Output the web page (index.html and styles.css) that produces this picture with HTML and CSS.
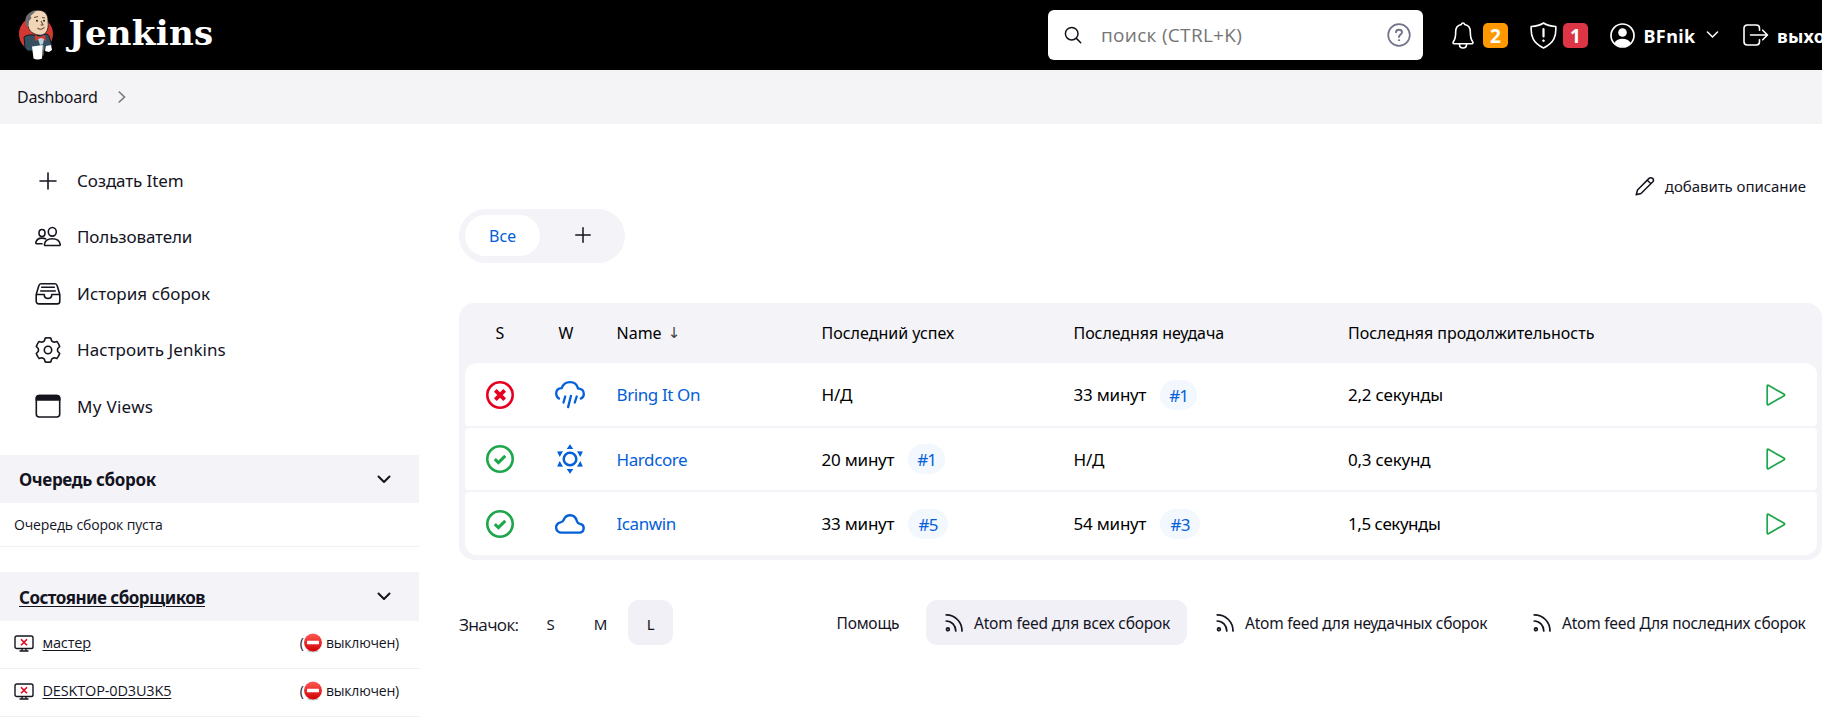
FILE: index.html
```html
<!DOCTYPE html>
<html lang="ru">
<head>
<meta charset="utf-8">
<title>Dashboard [Jenkins]</title>
<link rel="stylesheet" href="styles.css">
</head>
<body>
<svg class="defs" width="0" height="0">
  <defs>
    <linearGradient id="red" x1="0" y1="0" x2="0" y2="1"><stop offset="0" stop-color="#ff5a52"/><stop offset="1" stop-color="#d00008"/></linearGradient>
    <symbol id="rss" viewBox="0 0 18 20"><g fill="none" stroke="currentColor" stroke-width="1.7" stroke-linecap="round"><circle cx="2.900" cy="16.300" r="1.400"/><path d="M1.200 8C6.500 8 10.800 12.500 10.800 18M1.200 1.800C10 1.800 17 9 17 18"/></g></symbol>
    <symbol id="chev" viewBox="0 0 14 9"><path d="M1.500 1.500 7 7l5.500-5.500" fill="none" stroke="currentColor" stroke-width="2" stroke-linecap="round" stroke-linejoin="round"/></symbol>
    <symbol id="play" viewBox="0 0 20 22"><path d="M1.200 2v18a.8.8 0 0 0 1.200.7L18.200 11.700a.8.8 0 0 0 0-1.400L2.400 1.300A.8.8 0 0 0 1.200 2z" fill="none" stroke="currentColor" stroke-width="1.700" stroke-linejoin="round"/></symbol>
    <symbol id="ok" viewBox="0 0 28 28"><g fill="none" stroke="#1ea64b"><circle cx="14" cy="14" r="12.700" stroke-width="2.600"/><path d="m8.800 14.200 3.600 3.400 6.900-6.700" stroke-width="3"/></g></symbol>
    <symbol id="pc" viewBox="0 0 20 17"><rect x="1" y="1" width="18" height="12.500" rx="1.800" fill="none" stroke="currentColor" stroke-width="1.400"/><path d="M8 13.500v2.200M12 13.500v2.200M5.500 16h9" stroke="currentColor" stroke-width="1.300"/><path d="m7 4.200 6 6M13 4.200l-6 6" stroke="#e6001f" stroke-width="1.600"/></symbol>
    <symbol id="stop" viewBox="0 0 18 20"><ellipse cx="9" cy="18" rx="6" ry="1.500" fill="#ccc"/><circle cx="9" cy="9.500" r="9" fill="url(#red)"/><rect x="3" y="7.700" width="12" height="3.600" rx=".5" fill="#fff"/></symbol>
  </defs>
</svg>

<header class="top">
  <svg class="butler" width="36" height="52" viewBox="0 0 36 52">
    <ellipse cx="18" cy="25" rx="17" ry="17.500" fill="#d33833"/>
    <path d="M6 28C10 25 14 26 21 26.500 27 24 30 25 31 27l3 10-4 4-20 1-3-3z" fill="#335061" stroke="#10181d"/>
    <path d="M9 12C9 4 14 1.200 20 1.200S30 4.500 30 12c.5 5 0 9-2 11.500-2 2.300-5 3-7.500 2.500C15 25 11 22 10.500 18 9 17 8.500 15 9 12z" fill="#f0d6b7" stroke="#231f20" stroke-width=".8"/>
    <path d="M18 2C12 2 8 6 7.500 10L8 17l2.500 1 .5-6 2.500-3-1-2z" fill="#6d6b6d"/>
    <path d="M16 8.500l4-1M24 8.500l3 .5M23 12l2 4h-2.500M19.500 19c2 1.700 5 1.400 7-.6" fill="none" stroke="#6d4c3a" stroke-width="1.100"/>
    <circle cx="19" cy="11.800" r="1" fill="#222"/><circle cx="26" cy="11.800" r="1" fill="#222"/>
    <path d="m17 26 5 2 5-2 1 6-5.500-2L17 32z" fill="#d33833"/>
    <path d="m20 30 3-1 3 1-1 5-3 1z" fill="#b9d1dc"/>
    <path d="M14 37.500 25 36l-1 13.500c-2.500 1.200-6 1.200-8.500 0zM28 37l5-1 1 5-3 2-4-1z" fill="#fff"/>
    <path d="M25 36.500v10" stroke="#999" stroke-width="1"/>
  </svg>
  <span class="brand">Jenkins</span>
  <div class="search">
    <svg width="18" height="18" viewBox="0 0 18 18" fill="none" stroke="#14141f" stroke-width="1.500" stroke-linecap="round"><circle cx="7.700" cy="7.700" r="6.300"/><path d="m12.400 12.400 4.300 4.300"/></svg>
    <span class="ph">поиск (CTRL+K)</span>
    <svg width="24" height="24" viewBox="0 0 24 24" fill="none" stroke="#73738c" stroke-width="1.700" stroke-linecap="round"><circle cx="12" cy="12" r="10.800"/><path d="M9 9.200C9 7.500 10.200 6.700 12 6.700s3 .9 3 2.500c0 2.200-3 2.300-3 4.800" stroke-width="1.900"/><circle cx="12" cy="17.200" r=".6" fill="#73738c" stroke-width="1"/></svg>
  </div>
  <svg class="bell" width="22" height="27" viewBox="0 0 22 27" fill="none" stroke="#fff" stroke-width="1.600" stroke-linejoin="round"><path d="M11 1c-.9 0-1.500.7-1.700 1.500C5.600 3.300 3.700 6 3.700 9.500c0 6.500-.8 8.200-2.200 10-.9 1.100-.5 2.200.7 2.200h17.600c1.200 0 1.600-1.100.7-2.200-1.400-1.800-2.200-3.500-2.200-10 0-3.500-1.900-6.200-5.600-7C12.500 1.700 11.900 1 11 1zM7.500 21.700v.8c0 2 1.500 3.500 3.500 3.500s3.500-1.500 3.500-3.500v-.8"/></svg>
  <span class="badge warn">2</span>
  <svg class="shield" width="27" height="27" viewBox="0 0 27 27" fill="none" stroke="#fff" stroke-width="1.600" stroke-linejoin="round"><path d="M13.500 1C10.500 3 5.500 4.200 1.200 4.500.6 14 2.800 21 13.500 26 24.200 21 26.400 14 25.800 4.500 21.500 4.200 16.500 3 13.500 1z"/><path d="M13.500 7v7.500" stroke-width="2.200" stroke-linecap="round"/><circle cx="13.500" cy="18.700" r=".9" fill="#fff" stroke-width=".8"/></svg>
  <span class="badge danger">1</span>
  <svg class="user" width="25" height="25" viewBox="0 0 25 25"><circle cx="12.500" cy="12.500" r="11.500" fill="none" stroke="#fff" stroke-width="1.700"/><circle cx="12.500" cy="9.500" r="4.300" fill="#fff"/><path d="M4.500 20C6 17 9 15.800 12.500 15.800S19 17 20.500 20c-2 2.500-5 3.800-8 3.800S6.500 22.500 4.500 20z" fill="#fff"/></svg>
  <span class="who">BFnik</span>
  <svg class="dn" width="13" height="8" viewBox="0 0 13 8"><path d="m1.500 1 5 5 5-5" fill="none" stroke="#fff" stroke-width="1.500" stroke-linecap="round"/></svg>
  <svg class="exit" width="26" height="22" viewBox="0 0 26 22" fill="none" stroke="#fff" stroke-width="1.600" stroke-linecap="round" stroke-linejoin="round"><path d="M16.500 6.300V4.200A3.200 3.200 0 0 0 13.300 1H4.200A3.200 3.200 0 0 0 1 4.200v13.600A3.200 3.200 0 0 0 4.200 21h9.100a3.200 3.200 0 0 0 3.200-3.200v-2.100M7.500 11h17M19.700 6.200 24.500 11l-4.800 4.800"/></svg>
  <span class="out">выход</span>
</header>

<nav class="crumbs"><span>Dashboard</span><svg width="8" height="12" viewBox="0 0 8 12"><path d="M1.200 1 6.500 6 1.200 11" fill="none" stroke="#777782" stroke-width="1.600" stroke-linecap="round"/></svg></nav>

<div class="page">
  <aside>
    <a class="task"><svg class="ic" viewBox="0 0 26 26"><path d="M13 5v16M5 13h16"/></svg><span class="snug">Создать Item</span></a>
    <a class="task"><svg class="ic" viewBox="0 0 26 26"><ellipse cx="17.300" cy="7.800" rx="4" ry="4.300"/><path d="M17.300 14.700c-4 0-7.300 2-7.900 5.600-.1.700.3 1.200.9 1.200h14c.6 0 1-.5.9-1.200-.6-3.600-3.900-5.600-7.900-5.600z"/><ellipse cx="7" cy="9" rx="3" ry="3.500"/><path d="M10.500 14.800c-1-.5-2.200-.7-3.500-.7-3 0-5.600 1.600-6.200 4.500-.1.600.2 1.100.8 1.100H7"/></svg><span class="snug">Пользователи</span></a>
    <a class="task"><svg class="ic" viewBox="0 0 26 26"><path d="M1.200 13.500 3.800 4.700C4.100 3.500 4.900 2.700 6.200 2.700h13.600c1.300 0 2.100.8 2.400 2l2.600 8.800v6.700a2.700 2.700 0 0 1-2.700 2.700H3.900a2.700 2.700 0 0 1-2.700-2.700zh8c0 2.200 1.500 3.900 3.800 3.900s3.800-1.700 3.800-3.900h8M6.700 6.300h12.600M5.700 10h14.600"/></svg><span class="loose">История сборок</span></a>
    <a class="task"><svg class="ic" viewBox="-13 -13 26 26"><path d="M-2.800-11.900Q0-12.500 2.800-11.900L3.600-9.200Q5 -8 6.200-7.700L8.900-8.400Q10.800-6.200 11.700-3.500L9.800-1.500Q9.200 0 9.800 1.500L11.700 3.500Q10.800 6.200 8.900 8.400L6.200 7.700Q5 8 3.600 9.200L2.800 11.900Q0 12.500-2.800 11.900L-3.600 9.200Q-5 8-6.200 7.700L-8.900 8.400Q-10.800 6.200-11.700 3.500L-9.800 1.500Q-9.200 0-9.800-1.500L-11.700-3.500Q-10.800-6.200-8.900-8.400L-6.200-7.700Q-5-8-3.600-9.200z"/><circle r="3.700"/></svg><span class="loose">Настроить Jenkins</span></a>
    <a class="task"><svg class="ic" viewBox="0 0 26 26"><rect x="1.300" y="2.500" width="23.400" height="21.500" rx="3"/><path d="M1.300 7V5.500a3 3 0 0 1 3-3h17.400a3 3 0 0 1 3 3V7z" fill="#14141f"/></svg><span class="views">My Views</span></a>

    <section class="pane">
      <div class="phead"><span>Очередь сборок</span><svg width="14" height="9"><use href="#chev"/></svg></div>
      <div class="prow empty">Очередь сборок пуста</div>
    </section>
    <section class="pane second">
      <div class="phead"><span class="u ex">Состояние сборщиков</span><svg width="14" height="9"><use href="#chev"/></svg></div>
      <div class="prow node"><svg width="20" height="17"><use href="#pc"/></svg><span class="u">мастер</span><span class="off">(<svg width="18" height="20"><use href="#stop"/></svg> выключен)</span></div>
      <div class="prow node"><svg width="20" height="17"><use href="#pc"/></svg><span class="u desk">DESKTOP-0D3U3K5</span><span class="off">(<svg width="18" height="20"><use href="#stop"/></svg> выключен)</span></div>
    </section>
  </aside>

  <main>
    <div class="edit"><svg width="20" height="20" viewBox="0 0 20 20" fill="none" stroke="#14141f" stroke-width="1.500" stroke-linejoin="round"><path d="M1.200 18.800 2.500 14 14 2.400a2.500 2.500 0 0 1 3.600 3.600L6 17.500zM12.300 4.200l3.600 3.600"/></svg><span>добавить описание</span></div>
    <div class="tabs"><span class="tab on">Все</span><span class="tab"><svg width="16" height="16" viewBox="0 0 16 16"><path d="M8 .8v14.400M.8 8h14.400" stroke="#14141f" stroke-width="1.500" stroke-linecap="round"/></svg></span></div>

    <div class="table">
      <div class="row head"><span class="hs">S</span><span class="hw">W</span><span class="name">Name <i>↓</i></span><span>Последний успех</span><span class="h2">Последняя неудача</span><span>Последняя продолжительность</span></div>
      <div class="row r1">
        <span class="st"><svg width="28" height="28" viewBox="0 0 28 28" fill="none" stroke="#e6001f"><circle cx="14" cy="14" r="12.700" stroke-width="2.600"/><path d="m9.300 9.300 9.400 9.400M18.700 9.300l-9.400 9.400" stroke-width="3.800"/></svg></span>
        <span class="we"><svg width="30" height="30" viewBox="0 0 30 30" fill="none" stroke="#0460d8" stroke-width="2.300" stroke-linecap="round"><path d="M4 18.600C1.900 17.300 1.200 15.500 1.200 13.500c0-3.300 2.300-5.200 5.500-5.400C8 4.400 11 2.100 15 2.100s7 2.300 8 6.300c3.400.3 5.800 2.300 5.800 5.500 0 2.200-1 3.900-3 4.700M10.200 16.500l-1.700 6M16 15.800l-2.900 11.300M21.700 16.500l-1.900 6"/></svg></span>
        <a class="lnk">Bring It On</a><span>Н/Д</span><span>33 минут<b>#1</b></span><span>2,2 секунды</span><svg class="play" width="20" height="22"><use href="#play"/></svg>
      </div>
      <div class="row r2">
        <span class="st"><svg width="28" height="28"><use href="#ok"/></svg></span>
        <span class="we"><svg width="30" height="30" viewBox="-15 -15 30 30" fill="#0460d8"><circle r="6.300" fill="none" stroke="#0460d8" stroke-width="2.500"/><path d="M0-14.800-3.300-9.900H3.300zM0 14.800-3.300 9.900H3.300zM12.900-7.450 7-7.700 10.300-2zM12.900 7.450 7 7.700 10.300 2zM-12.900-7.450-7-7.700-10.300-2zM-12.900 7.450-7 7.700-10.300 2z"/></svg></span>
        <a class="lnk">Hardcore</a><span>20 минут<b>#1</b></span><span>Н/Д</span><span>0,3 секунд</span><svg class="play" width="20" height="22"><use href="#play"/></svg>
      </div>
      <div class="row r3">
        <span class="st"><svg width="28" height="28"><use href="#ok"/></svg></span>
        <span class="we"><svg width="30" height="30" viewBox="0 0 30 30" fill="none" stroke="#0460d8" stroke-width="2.400"><path d="M7 23.600h17.300a4.400 4.400 0 0 0 .9-8.700c-1.700-.3-2.700-1-3.200-2.600C21 8.700 18.500 6.300 15.200 6.300c-3 0-5.300 1.700-6.500 4.500-.5 1.400-1.500 2.200-3.200 2.600A5.150 5.150 0 0 0 7 23.600z"/></svg></span>
        <a class="lnk">Icanwin</a><span>33 минут<b class="wide">#5</b></span><span>54 минут<b class="wide">#3</b></span><span class="dur">1,5 секунды</span><svg class="play" width="20" height="22"><use href="#play"/></svg>
      </div>
    </div>

    <div class="foot">
      <span class="lab">Значок:</span><span class="sz">S</span><span class="sz m">M</span><span class="sz on">L</span>
      <span class="help">Помощь</span>
      <span class="feed on"><svg width="18" height="20"><use href="#rss"/></svg><span>Atom feed для всех сборок</span></span>
      <span class="feed f2"><svg width="18" height="20"><use href="#rss"/></svg><span>Atom feed для неудачных сборок</span></span>
      <span class="feed f3"><svg width="18" height="20"><use href="#rss"/></svg><span>Atom feed Для последних сборок</span></span>
    </div>
  </main>
</div>
</body>
</html>
```
FILE: styles.css
```css
* { box-sizing: border-box; }
body { margin: 0; height: 728px; overflow: hidden; background: #fff; color: #14141f; font: 17px/1 "Noto Sans", "Open Sans", sans-serif; }
svg { flex: none; display: block; }
span, a { white-space: nowrap; }
.defs { position: absolute; }

.top { display: flex; align-items: center; height: 70px; background: #000; color: #fff; padding-left: 18px; overflow: hidden; font-weight: 700; }
.top > * { flex: none; }
.butler { margin-top: -1px; }
.brand { width: 979px; margin-left: 14.500px; margin-right: .5px; margin-top: -4px; font: 700 34px/40px "DejaVu Serif", serif; letter-spacing: .3px; }
.search { display: flex; align-items: center; width: 375px; height: 50px; background: #fff; border-radius: 6px; padding: 0 12.500px 0 16px; color: #757575; font: 400 19px/1 "Open Sans", sans-serif; }
.ph { flex: 1; margin-left: 19px; padding-top: 1px; letter-spacing: .3px; }
.bell { margin-left: 29px; }
.badge { width: 25px; height: 25px; margin-top: 1px; border-radius: 5px; text-align: center; font-size: 19px; line-height: 26px; }
.warn { background: #ff9800; margin-left: 9px; }
.danger { background: #dc3545; margin-left: 6px; }
.shield { margin-left: 22px; }
.user { margin-left: 22px; }
.who { width: 55px; margin-left: 8.500px; padding-top: 2px; font-size: 18px; letter-spacing: .4px; }
.dn { margin-left: 7.500px; }
.exit { margin-left: 24px; }
.out { margin-left: 8px; padding-top: 2px; font-size: 18px; letter-spacing: .2px; }

.crumbs { display: flex; align-items: center; gap: 20px; height: 54px; padding-left: 17px; background: #f4f4f6; font-size: 16px; letter-spacing: -.25px; }

.page { display: flex; }
aside { width: 419px; padding-top: 29px; }
.task { display: flex; align-items: center; height: 56.25px; padding-left: 35px; gap: 16px; }
.ic { width: 26px; height: 26px; fill: none; stroke: #14141f; stroke-width: 1.600; stroke-linecap: round; stroke-linejoin: round; }
.snug { padding-bottom: 1px; letter-spacing: -.12px; }
.loose { letter-spacing: .06px; }
.views { letter-spacing: .3px; }

.pane { margin-top: 20.750px; }
.pane.second { margin-top: 25px; }
.phead { display: flex; align-items: center; justify-content: space-between; height: 48px; padding: 0 28px 0 19px; background: #f3f3f8; font-weight: 700; letter-spacing: -.35px; }
.phead span { padding-top: 1px; }
.second .phead { height: 49px; }
.u { text-decoration: underline; text-underline-offset: 2px; text-decoration-thickness: 1px; }
.phead .ex { letter-spacing: -.52px; }
.prow { display: flex; align-items: center; height: 48px; padding: 0 20px 3px 14px; border-bottom: 1px solid #f0f0f5; font: 14.500px/1 "Open Sans", sans-serif; }
.empty { height: 44px; padding-bottom: 0; font-size: 14px; letter-spacing: -.15px; }
.node .u { margin-left: 8.500px; letter-spacing: -.16px; }
.off { display: flex; align-items: center; margin-left: auto; font-size: 14px; white-space: pre; letter-spacing: -.22px; }
.off svg { margin-right: 1px; }

main { flex: 1; padding: 53px 0 0 40px; }
.edit { display: flex; align-items: center; justify-content: flex-end; gap: 10px; height: 20px; padding-right: 16px; font-size: 15px; letter-spacing: -.05px; }
.edit svg { margin-top: -2px; }
.edit span { padding-bottom: 1px; }
.tabs { display: flex; width: 166px; height: 54px; margin-top: 12px; padding: 6px 0 6px 6px; border-radius: 27px; background: #f3f3f8; }
.tab { display: flex; flex: none; align-items: center; justify-content: center; width: 75px; height: 41px; border-radius: 21px; font-size: 16px; }
.tab + .tab { width: 85px; height: 40px; }
.tab.on { background: #fff; color: #0460d8; }

.table { height: 257px; margin-top: 40px; padding: 0 5px 5px 6px; border-radius: 15px; background: #f3f3f8; color: #000; }
.row { display: grid; grid-template-columns: 70px 81.500px 205px 252px 274.500px 418px 20px; align-items: center; height: 63px; background: #fff; border-radius: 4px; margin-bottom: 2px; letter-spacing: -.22px; }
.row > span { display: flex; align-items: center; }
.row.head { height: 60px; margin: 0; background: none; font-size: 16px; letter-spacing: 0; }
.head .hs { padding-left: 30.500px; }
.head .hw { padding-left: 23.500px; }
.head .h2 { letter-spacing: -.07px; }
.head i { margin-left: 6px; font: 15px "DejaVu Sans", sans-serif; color: #444; }
.r1 { border-radius: 12px 12px 4px 4px; }
.row.r2 { height: 62px; }
.row.r3 { border-radius: 4px 4px 12px 12px; margin: 0; }
.st { padding-left: 21px; }
.we { padding-left: 20px; }
.row .lnk { color: #0460d8; letter-spacing: -.4px; }
.row b { width: 37px; margin-left: 14px; height: 30px; border-radius: 15px; background: #f2f8fd; color: #0460d8; font-weight: 400; text-align: center; line-height: 31px; letter-spacing: -1px; }
.row b.wide { width: 40px; letter-spacing: -.6px; }
.row .dur { letter-spacing: -.45px; }
.play { color: #1ea64b; }

.foot { display: flex; align-items: center; height: 45px; margin-top: 40px; font-size: 15.500px; letter-spacing: -.2px; }
.lab { width: 69px; padding-top: 3px; font: 17px/1 "Open Sans", sans-serif; letter-spacing: -.65px; }
.sz { width: 45px; height: 45px; border-radius: 11px; text-align: center; line-height: 48px; font-size: 15px; }
.sz.m { width: 55px; }
.sz.on { background: #f1f0f7; }
.help { margin-left: 163.500px; width: 89.500px; padding-top: 3px; }
.feed { display: flex; align-items: center; gap: 11px; height: 45px; border-radius: 11px; }
.feed span { padding-top: 3px; }
.feed.on { width: 261px; padding-left: 19px; background: #f1f0f7; }
.f2 { margin-left: 29px; width: 317px; letter-spacing: -.25px; }
.f3 { letter-spacing: -.24px; }
```
